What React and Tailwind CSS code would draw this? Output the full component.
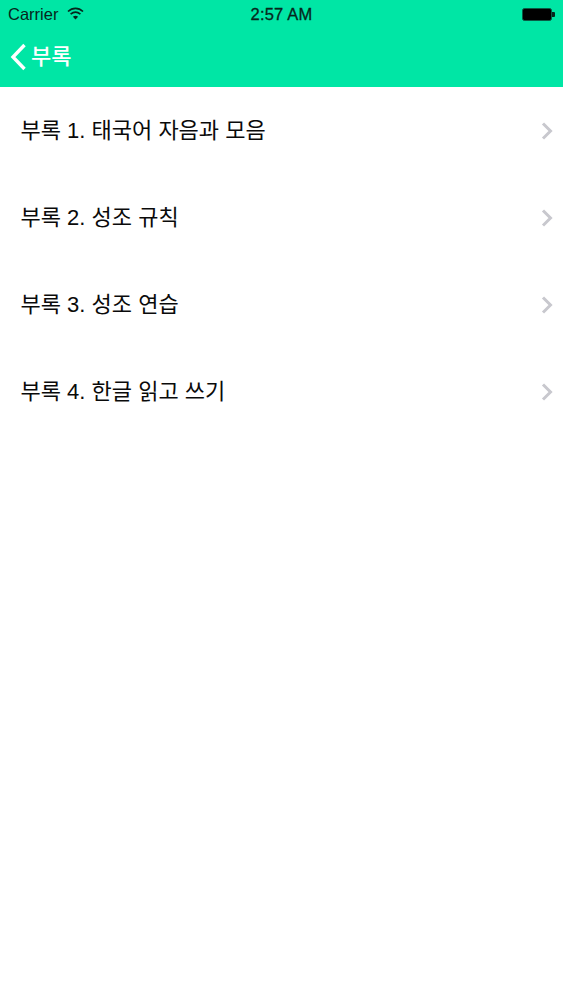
import React from "react";

const rows = [
  "부록 1. 태국어 자음과 모음",
  "부록 2. 성조 규칙",
  "부록 3. 성조 연습",
  "부록 4. 한글 읽고 쓰기",
];

function Chevron() {
  return (
    <svg width="14" height="20" viewBox="0 0 14 20" fill="none" className="shrink-0">
      <path d="M3 2.5 L10.5 10 L3 17.5" stroke="#c8c8ce" strokeWidth="3" />
    </svg>
  );
}

export default function App() {
  return (
    <div className="w-[563px] h-[1000px] bg-white overflow-hidden font-['Liberation_Sans','Noto_Sans_CJK_KR',sans-serif]">
      <header className="h-[87px] bg-[#00e6a5] flex flex-col">
        <div className="h-[29px] flex items-center justify-between pl-[8px] pr-[8px] text-[#06261c]">
          <div className="flex items-center gap-[9px] w-[180px]">
            <span className="text-[16.5px] leading-none">Carrier</span>
            <svg width="17" height="13" viewBox="0 0 17 13" fill="none" className="-mt-[3px]">
              <path d="M1 4.5 C5.5 0.3 11.5 0.3 16 4.5" stroke="#06261c" strokeWidth="1.7" />
              <path d="M3.6 7.2 C6.6 4.6 10.4 4.6 13.4 7.2" stroke="#06261c" strokeWidth="1.7" />
              <path d="M8.5 12.5 L5.9 9.7 C7.4 8.5 9.6 8.5 11.1 9.7 Z" fill="#06261c" />
            </svg>
          </div>
          <span className="text-[16.5px] leading-none font-medium tracking-[0.2px] [-webkit-text-stroke:0.3px_#06261c]">2:57 AM</span>
          <div className="w-[180px] flex justify-end items-center">
            <div className="w-[30px] h-[13px] rounded-[2.5px] bg-black border border-[#0a5a44]" />
            <div className="w-[3px] h-[5px] bg-[#06261c] rounded-r-[1px]" />
          </div>
        </div>
        <div className="flex-1 flex items-center pl-[10px] pb-[3px] text-white">
          <svg width="17" height="28" viewBox="0 0 17 28" fill="none" className="shrink-0">
            <path d="M14.5 2 L3 14 L14.5 26" stroke="white" strokeWidth="3.4" />
          </svg>
          <span className="ml-[4px] text-[22px] leading-none font-medium">부록</span>
        </div>
      </header>
      <ul className="flex flex-col">
        {rows.map((r) => (
          <li key={r} className="h-[87.1px] flex items-center justify-between pl-[20.5px] pr-[9px] text-[#0a0a0a]">
            <span className="text-[22px] leading-none">{r}</span>
            <Chevron />
          </li>
        ))}
      </ul>
    </div>
  );
}
